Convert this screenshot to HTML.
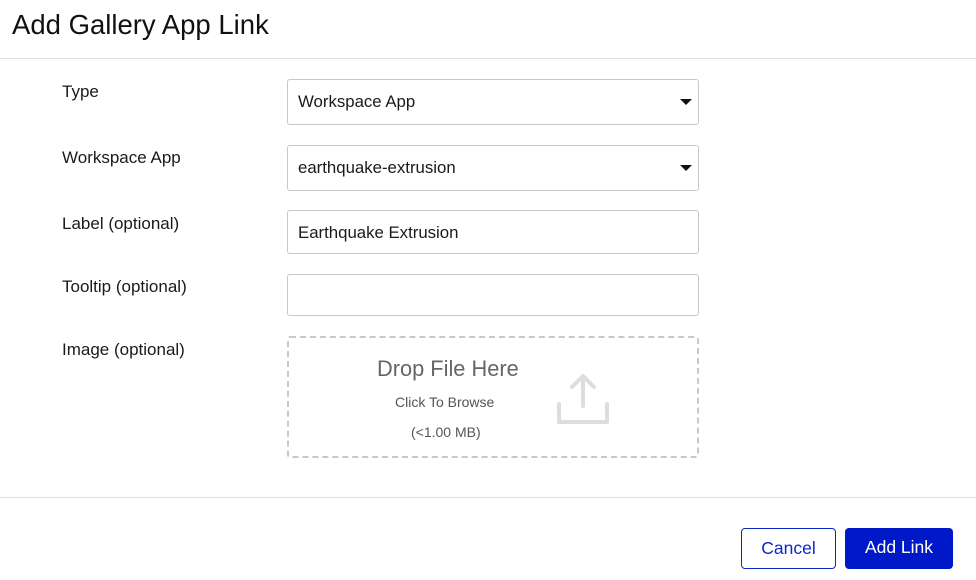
<!DOCTYPE html>
<html><head><style>
*{box-sizing:border-box;margin:0;padding:0}
body{width:976px;height:580px;background:#fff;font-family:"Liberation Sans",sans-serif;color:#1a1a1a;position:relative;overflow:hidden}
.title{position:absolute;left:12px;top:9px;font-size:27.5px;color:#111}
.hr{position:absolute;left:0;width:976px;height:1px;background:#ddd}
.lbl{position:absolute;left:62px;font-size:17px;color:#1a1a1a}
.in{position:absolute;left:287px;width:412px;height:46px;border:1px solid #c8c8c8;border-radius:3px;font-size:16.8px;padding:0 10px;line-height:44px}
.arr{position:absolute;right:6px;top:19px;width:0;height:0;border-left:6px solid transparent;border-right:6px solid transparent;border-top:6px solid #111}
.drop{position:absolute;left:287px;top:336px;width:412px;height:122px;border:2px dashed #c8c8c8;border-radius:3px}
.btn{position:absolute;top:528px;height:41px;border-radius:4px;font-size:17.5px;text-align:center;line-height:39px}
</style></head><body>
<div class="title">Add Gallery App Link</div>
<div class="hr" style="top:58px"></div>
<div class="lbl" style="top:82px">Type</div>
<div class="in" style="top:79px">Workspace App<div class="arr"></div></div>
<div class="lbl" style="top:148px">Workspace App</div>
<div class="in" style="top:145px">earthquake-extrusion<div class="arr"></div></div>
<div class="lbl" style="top:214px">Label (optional)</div>
<div class="in" style="top:210px;height:44px;line-height:43px">Earthquake Extrusion</div>
<div class="lbl" style="top:277px">Tooltip (optional)</div>
<div class="in" style="top:274px;height:42px"></div>
<div class="lbl" style="top:340px">Image (optional)</div>
<div class="drop">
<div style="position:absolute;left:88px;top:18px;font-size:21.8px;color:#666">Drop File Here</div>
<div style="position:absolute;left:106px;top:56px;font-size:14px;color:#555">Click To Browse</div>
<div style="position:absolute;left:122px;top:86px;font-size:14px;color:#555">(&lt;1.00 MB)</div>
<svg style="position:absolute;left:266px;top:32px" width="56" height="56" viewBox="0 0 56 56"><g fill="none" stroke="#ddd" stroke-width="4" stroke-linecap="round" stroke-linejoin="round"><path d="M28 6V36M17 17L28 6L39 17"/><path d="M4 34V52H52V34"/></g></svg>
</div>
<div class="hr" style="top:497px"></div>
<div class="btn" style="left:741px;width:95px;border:1px solid #0a28c8;color:#0a28c8">Cancel</div>
<div class="btn" style="left:845px;width:108px;background:#0019c8;color:#fff">Add Link</div>
</body></html>
